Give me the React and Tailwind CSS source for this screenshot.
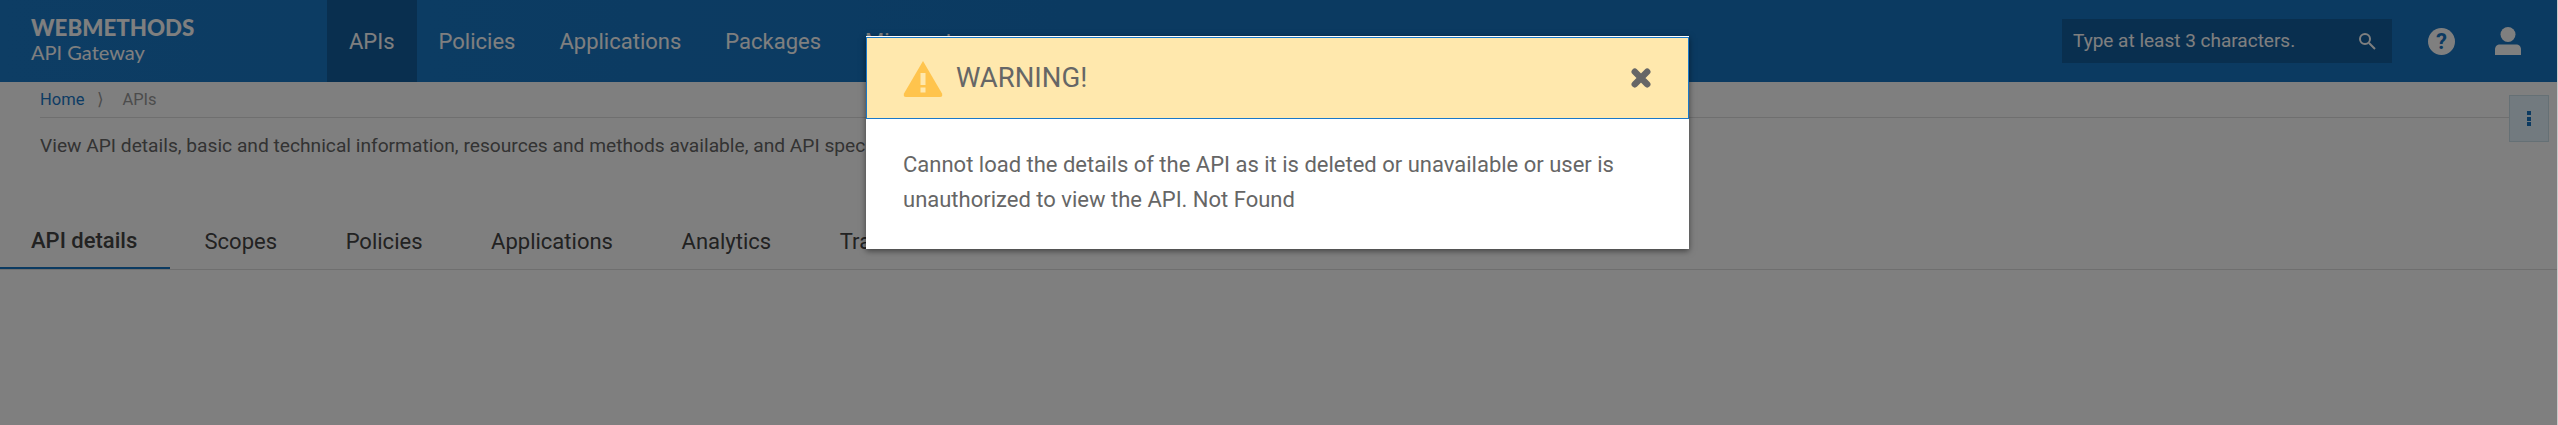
import React from 'react';

const navItems = ['APIs', 'Policies', 'Applications', 'Packages', 'Microgateways'];
const tabs = ['API details', 'Scopes', 'Policies', 'Applications', 'Analytics', 'Traces'];

function TopBar() {
  return (
    <div className="flex h-[82px] items-stretch bg-gradient-to-r from-[#1a7ac8] via-[#1674c2] to-[#1674c2]">
      <div className="flex w-[327px] flex-col pl-[31px] pt-[15px] text-white">
        <div className="font-['Lato',sans-serif] text-[22.300px] font-black leading-[26px]">WEBMETHODS</div>
        <div className="font-['Lato',sans-serif] text-[20px] leading-[22px]">API Gateway</div>
      </div>
      <div className="flex items-stretch">
        {navItems.map((item, i) => (
          <div key={item} className={`flex items-center px-[22px] text-[22px] text-white ${i === 0 ? 'bg-[#125e9f]' : ''}`}>
            {item}
          </div>
        ))}
      </div>
      <div className="ml-auto flex items-center">
        <div className="flex h-[44px] w-[330px] items-center justify-between bg-[#125e9f] pl-[11px] pr-[16px] text-[19px] text-white">
          <span>Type at least 3 characters.</span>
          <svg width="18" height="18" viewBox="0 0 18 18" fill="none" stroke="white" strokeWidth="2">
            <circle cx="7" cy="7" r="5" />
            <path d="M11 11l6 6" />
          </svg>
        </div>
        <div className="ml-[36px] flex h-[27px] w-[27px] items-center justify-center rounded-full bg-white text-[22px] font-bold text-[#1674c2]">?</div>
        <svg className="ml-[40px] mr-[36px]" width="26" height="28" viewBox="0 0 26 28" fill="white">
          <circle cx="13" cy="7.5" r="7.5" />
          <path d="M0 28v-5c0-4 2-5.500 5-5.500h16c3 0 5 1.500 5 5.500v5z" />
        </svg>
      </div>
    </div>
  );
}

function WarningDialog() {
  return (
    <div className="absolute left-[866px] top-[36px] w-[823px] border-t border-white bg-white shadow-[0_2px_6px_rgba(0,0,0,0.5)]">
      <div className="flex h-[82px] items-center border border-[#1a78c8] bg-[#ffe8ad] pl-[36px] pr-[37px]">
        <svg width="40" height="37" viewBox="0 0 40 37">
          <path d="M20 1L39 33.500Q40 37 37 37H3Q0 37 1 33.500Z" fill="#ffc44d" />
          <rect x="17.500" y="13" width="5" height="12" fill="#ffe8ad" />
          <rect x="17.500" y="27.500" width="5" height="5" fill="#ffe8ad" />
        </svg>
        <span className="ml-[13px] text-[27.500px] text-[#666666]">WARNING!</span>
        <svg className="ml-auto" width="20" height="20" viewBox="0 0 20 20" stroke="#666666" strokeWidth="6.500" strokeLinecap="round">
          <path d="M3.800 3.800L16.200 16.200M16.200 3.800L3.800 16.200" />
        </svg>
      </div>
      <div className="px-[37px] pb-[32px] pt-[28px] text-[22px] leading-[35px] text-[#666666]">
        Cannot load the details of the API as it is deleted or unavailable or user is<br />
        unauthorized to view the API. Not Found
      </div>
    </div>
  );
}

export default function App() {
  return (
    <div className="relative h-[425px] overflow-hidden border-r border-[#c8c8c8] bg-white font-['Roboto',sans-serif]">
      <TopBar />
      <div className="relative">
        <div className="ml-[40px] mr-[48px] flex h-[36px] items-center border-b border-[#dedede] pt-[1px] text-[16.500px] text-[#999999]">
          <span className="text-[#1a78c8]">Home</span>
          <span className="ml-[13px] mr-[18px] text-[#999999]">⟩</span>
          <span>APIs</span>
        </div>
        <div className="absolute right-[8px] top-[13px] flex h-[47px] w-[40px] flex-col items-center justify-center gap-[1.500px] border border-[#cae0ea] bg-[#e4f4ff]">
          <i className="h-[4px] w-[4px] bg-[#1674c2]" />
          <i className="h-[4px] w-[4px] bg-[#1674c2]" />
          <i className="h-[4px] w-[4px] bg-[#1674c2]" />
        </div>
        <p className="ml-[40px] mt-[15px] text-[19.200px] leading-[26px] text-[#666666]">
          View API details, basic and technical information, resources and methods available, and API specification.
        </p>
        <div className="mt-[61px] flex h-[50px] border-b border-[#dedede] text-[22px] text-[#444444]">
          {tabs.map((tab, i) => (
            <div
              key={tab}
              className={i === 0 ? 'border-b-2 border-[#1674c2] pl-[31px] pr-[33px] pt-[4px] font-medium' : 'px-[34.300px] pt-[5px]'}
            >
              {tab}
            </div>
          ))}
        </div>
      </div>
      <div className="absolute inset-0 bg-black/50" />
      <WarningDialog />
    </div>
  );
}
